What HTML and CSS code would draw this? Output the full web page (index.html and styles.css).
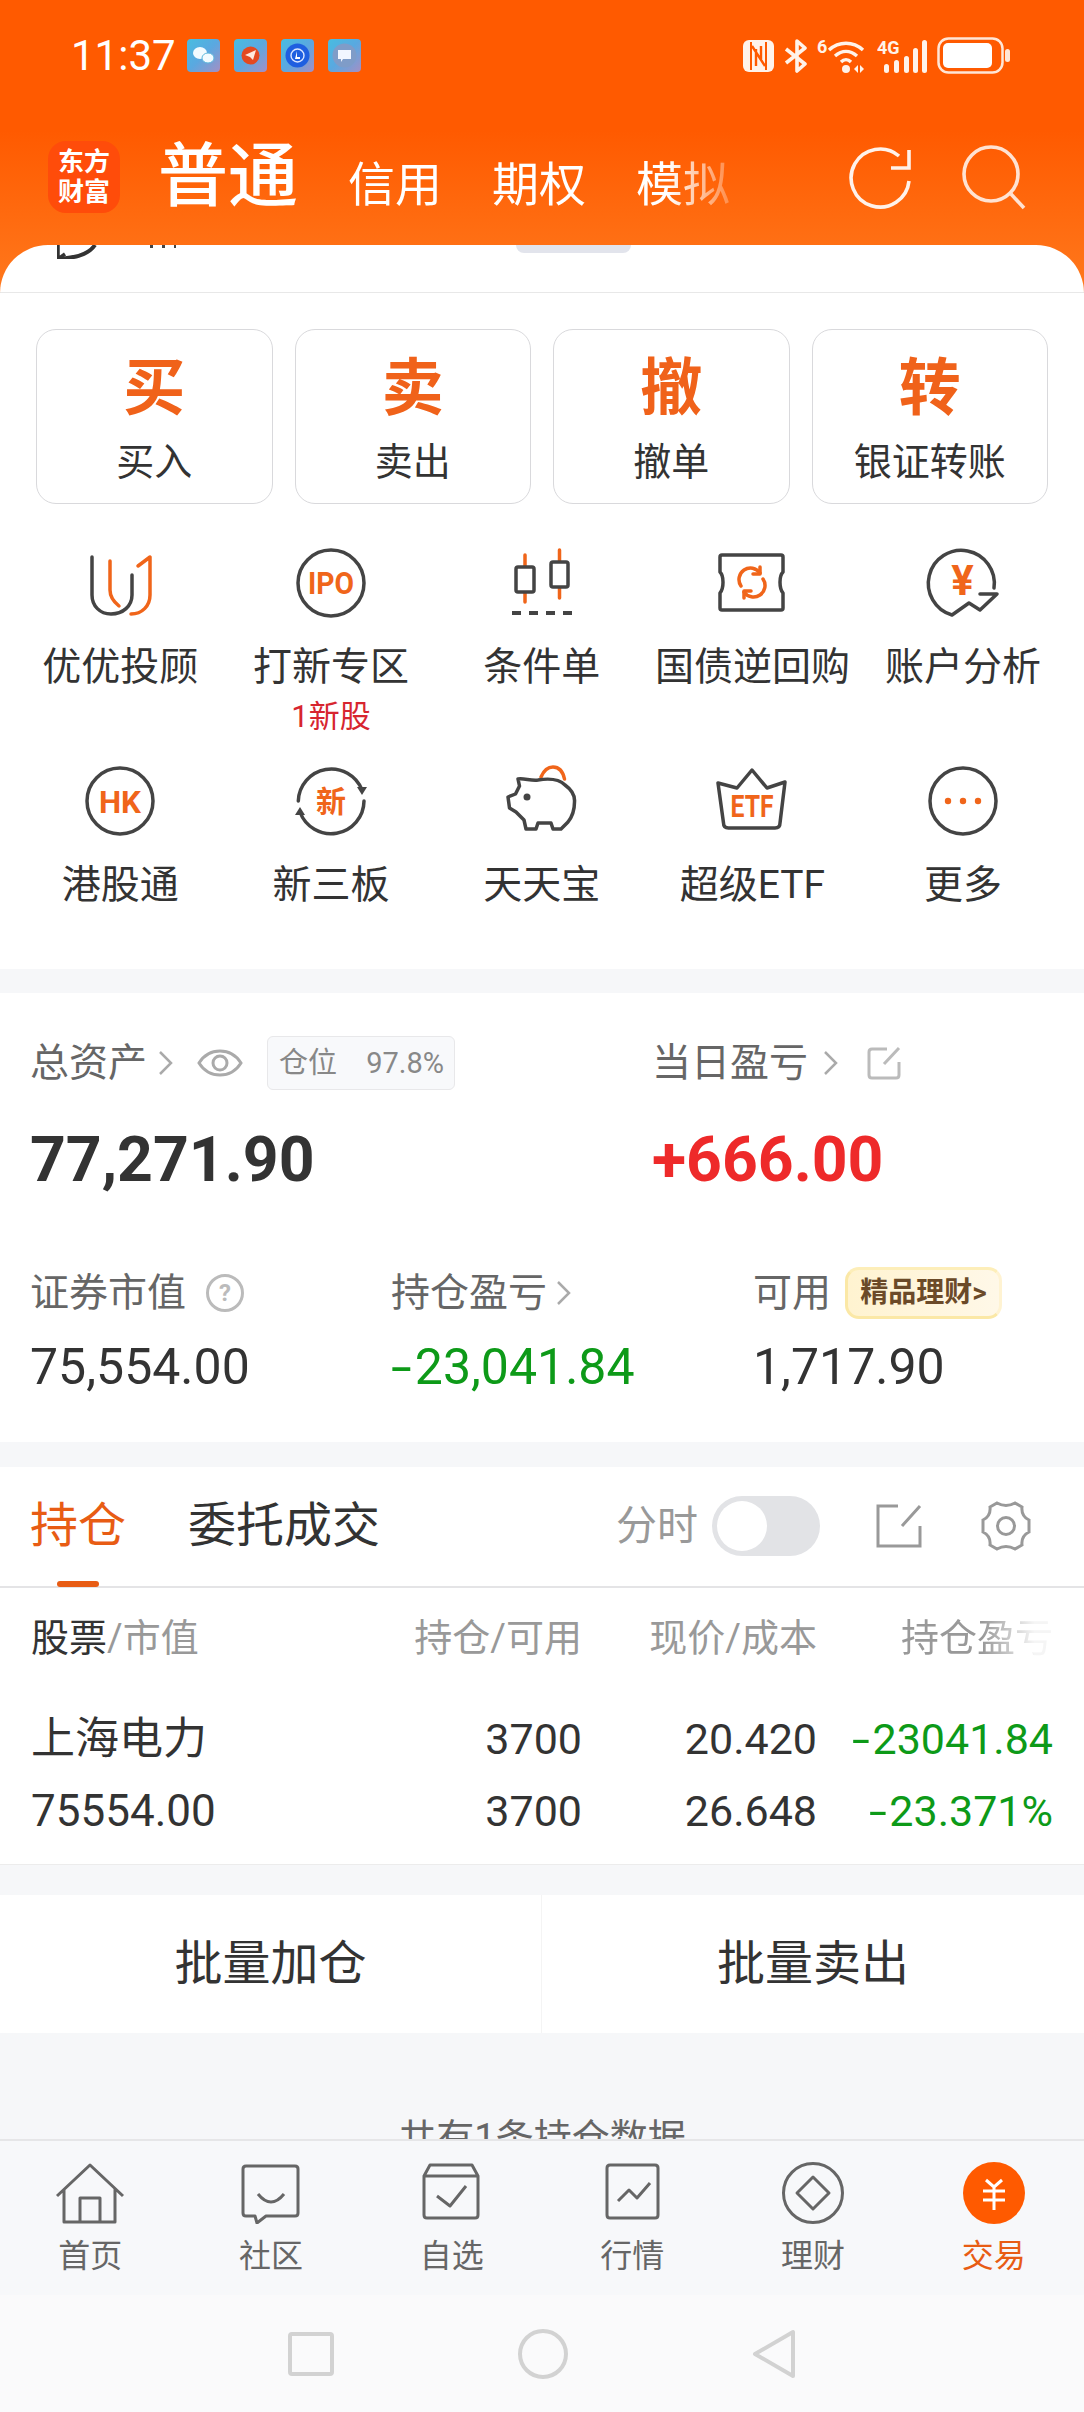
FILE: index.html
```html
<!DOCTYPE html>
<html lang="zh-CN">
<head>
    <meta charset="UTF-8">
    <title>交易</title>
    <link rel="stylesheet" href="styles.css">
</head>
<body>
<div class="app">
    <div class="top">
        <div class="status">
            <span class="status__time">11:37</span>
            <div class="status__apps">
                <span class="app-dot"><svg width="33" height="33" viewBox="0 0 33 33"><ellipse cx="13" cy="14" rx="7" ry="6" fill="#f2fbff"/><ellipse cx="21" cy="19" rx="6" ry="5" fill="#f2fbff" stroke="#5cb8dc"/></svg></span>
                <span class="app-dot"><svg width="33" height="33" viewBox="0 0 33 33"><circle cx="16.5" cy="16.5" r="9" fill="#e4491f"/><path d="M11 16l11-5-3 10-3-3z" fill="#ffe9dc"/></svg></span>
                <span class="app-dot"><svg width="33" height="33" viewBox="0 0 33 33"><circle cx="16.5" cy="16.5" r="12" fill="#1f5fe0"/><circle cx="16.5" cy="16.5" r="6.5" fill="none" stroke="#dbe7ff" stroke-width="1.4"/><path d="M16 12v6h3v2h-5z" fill="#fff"/></svg></span>
                <span class="app-dot"><svg width="33" height="33" viewBox="0 0 33 33"><circle cx="16.5" cy="16.5" r="12" fill="#7f9cc8"/><path d="M10 11h13v9h-8l-2 3v-3h-3z" fill="#f2f6ff"/></svg></span>
            </div>
            <div class="status__sys">
                <svg width="31" height="32" viewBox="0 0 31 32"><rect width="31" height="32" rx="6" fill="#fff3ea"/><path d="M8 2v28M23 2v28" stroke="#ff5a00" stroke-width="2"/><path d="M9 6l13 20M13 9v17M18 6v13" stroke="#ff5a00" stroke-width="2.4" fill="none"/></svg>
                <svg width="23" height="34" viewBox="0 0 23 34"><path d="M2 10l19 15-8 7V2l8 7L2 24" fill="none" stroke="#fff3ea" stroke-width="3.6" stroke-linejoin="round"/></svg>
                <svg width="50" height="36" viewBox="0 0 50 36"><text x="0" y="15" class="sys-text">6</text><path d="M12 12c10-9 24-9 34 0M18 18c7-6 15-6 22 0M24 24c3-3 7-3 10 0" fill="none" stroke="#fff3ea" stroke-width="3.4"/><circle cx="29" cy="31" r="4" fill="#fff3ea"/><path d="M37 31l4-4v8zM43 27l4 4-4 4z" fill="#fff3ea"/></svg>
                <svg width="50" height="36" viewBox="0 0 50 36"><text x="0" y="16" class="sys-text">4G</text><rect x="7" y="26" width="5" height="9" rx="2.5" fill="#fff3ea"/><rect x="17" y="22" width="5" height="13" rx="2.5" fill="#fff3ea"/><rect x="27" y="18" width="5" height="17" rx="2.5" fill="#fff3ea"/><rect x="36" y="10" width="5" height="25" rx="2.5" fill="#fff3ea"/><rect x="45" y="2" width="5" height="33" rx="2.5" fill="#fff3ea"/></svg>
                <svg width="73" height="37" viewBox="0 0 73 37"><rect x="1.5" y="1.5" width="64" height="34" rx="10" fill="none" stroke="#ffe6d6" stroke-width="2.5"/><rect x="6" y="6" width="49" height="25" rx="5" fill="#fff"/><rect x="68" y="12" width="5" height="13" rx="2.5" fill="#ffe6d6"/></svg>
            </div>
        </div>
        <div class="head">
            <div class="logo"><span>东方</span><span>财富</span></div>
            <div class="head__tabs">
                <span class="head__tab head__tab--on">普通</span>
                <span class="head__tab">信用</span>
                <span class="head__tab">期权</span>
                <span class="head__tab">模拟</span>
            </div>
            <svg class="head__refresh" width="66" height="66" viewBox="0 0 66 66"><path d="M62 35A29 29 0 1 1 52 10M44 22H62V4" fill="none" stroke="#fff2ea" stroke-width="3.6"/></svg>
            <svg class="head__search" width="66" height="66" viewBox="0 0 66 66"><circle cx="30" cy="30" r="27" fill="none" stroke="#ffe2d2" stroke-width="3.6"/><path d="M50 50L63 64" stroke="#ffe2d2" stroke-width="3.6"/></svg>
        </div>
    </div>

    <div class="notice">
        <svg class="notice__bubble" width="40" height="14" viewBox="0 0 40 14"><path d="M1 14C12 13 30 12 38 0" fill="none" stroke="#333" stroke-width="4"/><path d="M1 0V14L8 9" fill="none" stroke="#333" stroke-width="3.5"/></svg>
        <span class="notice__stub"></span>
        <span class="notice__chip"></span>
    </div>

    <div class="trade">
        <div class="orders">
            <div class="order"><b>买</b><span>买入</span></div>
            <div class="order"><b>卖</b><span>卖出</span></div>
            <div class="order"><b>撤</b><span>撤单</span></div>
            <div class="order"><b>转</b><span>银证转账</span></div>
        </div>
        <div class="menu">
            <div class="menu__item">
                <svg class="ico" viewBox="0 0 70 70"><path d="M25 13V42C25 49 29 54 34 58" class="ln ln--o"/><path d="M7 9V47C7 58 15 66 26 66C38 66 47 58 47 47V27" class="ln"/><path d="M53 18L65 9V47C65 58 57 66 46 66" class="ln ln--o"/></svg>
                <span>优优投顾</span>
            </div>
            <div class="menu__item">
                <svg class="ico" viewBox="0 0 70 70"><circle cx="35" cy="35" r="33" class="ln"/><text x="35" y="46" textLength="46" lengthAdjust="spacingAndGlyphs" class="ico-text ico-text--ipo">IPO</text></svg>
                <span>打新专区</span>
                <em>1新股</em>
            </div>
            <div class="menu__item">
                <svg class="ico" viewBox="0 0 70 70"><path d="M18 7V54M52.500 2V50" class="ln ln--o"/><rect x="9" y="19" width="18" height="25" rx="2" class="ln ln--fill"/><rect x="44" y="14" width="17" height="25" rx="2" class="ln ln--fill"/><path d="M5 65H65" class="ln ln--dash"/></svg>
                <span>条件单</span>
            </div>
            <div class="menu__item">
                <svg class="ico" viewBox="0 0 70 70"><path d="M5 7H64A2 2 0 0 1 66 9V24C62 28 62 40 66 45V60A2 2 0 0 1 64 62H5A2 2 0 0 1 3 60V45C7 40 7 28 3 24V9A2 2 0 0 1 5 7Z" class="ln"/><path d="M24 38A11 11 0 0 1 43 25M46 31A11 11 0 0 1 27 44" class="ln ln--o"/><path d="M43 19V26H36M27 50V43H34" class="ln ln--o"/></svg>
                <span>国债逆回购</span>
            </div>
            <div class="menu__item">
                <svg class="ico" viewBox="0 0 70 70"><path d="M66 40A33 33 0 1 0 24 67L41 55L52 62L69 46H52" class="ln"/><text x="34.500" y="47" class="ico-text ico-text--yen">¥</text></svg>
                <span>账户分析</span>
            </div>
            <div class="menu__item">
                <svg class="ico" viewBox="0 0 70 70"><circle cx="35" cy="35" r="33" class="ln"/><text x="35" y="47" textLength="42" lengthAdjust="spacingAndGlyphs" class="ico-text ico-text--hk">HK</text></svg>
                <span>港股通</span>
            </div>
            <div class="menu__item">
                <svg class="ico" viewBox="0 0 70 70"><path d="M2.300 35A33 33 0 0 1 66 24M68 35A33 33 0 0 1 4 46" class="ln"/><path d="M61 21H71L66 29ZM-1 49H9L4 41Z" fill="#444"/><text x="35" y="46" class="ico-text ico-text--xin">新</text></svg>
                <span>新三板</span>
            </div>
            <div class="menu__item">
                <svg class="ico" viewBox="0 0 70 70"><path d="M34 11C37 4 41 1 46 1C52 1 56 6 57.500 13" class="ln ln--o"/><path d="M11 13C17 12 24 15 31 14C43 12 52 13 58 19C65 24 68 30 67.500 36C67.500 44 65 51 61 56L54 63H46L44 57H31L29 63H19L17 54L9 46L2.500 42L1 31L8.500 28L12.500 20Z" class="ln"/><circle cx="20" cy="31" r="3.500" fill="#444"/></svg>
                <span>天天宝</span>
            </div>
            <div class="menu__item">
                <svg class="ico" viewBox="0 0 70 70"><path d="M1 17L20 22L35 4L50 22L68 16L63 57Q63 62 58 62H11.500Q6.500 62 6.500 57Z" class="ln"/><text x="35" y="51" textLength="43" lengthAdjust="spacingAndGlyphs" class="ico-text ico-text--etf">ETF</text></svg>
                <span>超级ETF</span>
            </div>
            <div class="menu__item">
                <svg class="ico" viewBox="0 0 70 70"><circle cx="35" cy="35" r="33" class="ln"/><circle cx="20" cy="35" r="3.200" fill="#f0651a"/><circle cx="35" cy="35" r="3.200" fill="#f0651a"/><circle cx="50" cy="35" r="3.200" fill="#f0651a"/></svg>
                <span>更多</span>
            </div>
        </div>
    </div>

    <div class="band band--24"></div>

    <div class="stats">
        <div class="stats__main">
            <div class="stat">
                <div class="stat__label">
                    <span>总资产</span>
                    <svg class="chev" viewBox="0 0 15 26"><path d="M2 2L13 13L2 24"/></svg>
                    <svg class="eye" viewBox="0 0 46 30"><path d="M2 15C12 -1 34 -1 44 15C34 31 12 31 2 15Z"/><circle cx="23" cy="15" r="7"/></svg>
                    <span class="pos-tag"><span>仓位</span><span class="pos-tag__num">97.8%</span></span>
                </div>
                <div class="num-big">77,271.90</div>
            </div>
            <div class="stat">
                <div class="stat__label">
                    <span>当日盈亏</span>
                    <svg class="chev chev--wide" viewBox="0 0 15 26"><path d="M2 2L13 13L2 24"/></svg>
                    <svg class="open-ico" viewBox="0 0 34 34"><path d="M20 3H5Q2 3 2 6V29Q2 32 5 32H29Q32 32 32 29V16M17 18L32 2"/></svg>
                </div>
                <div class="num-big num-big--up">+666.00</div>
            </div>
        </div>
        <div class="stats__sub">
            <div class="stat">
                <div class="stat__label">
                    <span>证券市值</span>
                    <span class="help">?</span>
                </div>
                <div class="num-mid">75,554.00</div>
            </div>
            <div class="stat">
                <div class="stat__label">
                    <span>持仓盈亏</span>
                    <svg class="chev chev--tight" viewBox="0 0 15 26"><path d="M2 2L13 13L2 24"/></svg>
                </div>
                <div class="num-mid num-mid--down"><span class="minus">-</span>23,041.84</div>
            </div>
            <div class="stat">
                <div class="stat__label">
                    <span>可用</span>
                    <span class="gold-tag">精品理财&gt;</span>
                </div>
                <div class="num-mid">1,717.90</div>
            </div>
        </div>
    </div>

    <div class="band band--25"></div>

    <div class="hold">
        <div class="hold__tabs">
            <span class="hold__tab hold__tab--on">持仓</span>
            <span class="hold__tab">委托成交</span>
            <div class="hold__tools">
                <span class="hold__time">分时</span>
                <span class="toggle"><i></i></span>
                <svg class="hold__open" viewBox="0 0 46 44"><path d="M22 2H2V42H44V22M26 22L44 2" fill="none" stroke="#999" stroke-width="3"/></svg>
                <svg class="hold__gear" viewBox="0 0 56 52"><path d="M19 3q9 5 18 0l7 4q-1 9 7 13v12q-8 4-7 13l-7 4q-9-5-18 0l-7-4q1-9-7-13v-12q8-4 7-13z" fill="none" stroke="#999" stroke-width="3"/><circle cx="28" cy="26" r="8.500" fill="none" stroke="#999" stroke-width="3"/></svg>
            </div>
        </div>
        <div class="tbl tbl--head">
            <span><b>股票</b>/市值</span>
            <span>持仓/可用</span>
            <span>现价/成本</span>
            <span class="tbl__fade">持仓盈亏</span>
        </div>
        <div class="tbl tbl--row">
            <span class="tbl__name">上海电力</span>
            <span>3700</span>
            <span>20.420</span>
            <span class="down"><i class="minus">-</i>23041.84</span>
            <span class="tbl__name">75554.00</span>
            <span>3700</span>
            <span>26.648</span>
            <span class="down"><i class="minus">-</i>23.371%</span>
        </div>
    </div>

    <div class="band band--31"></div>

    <div class="batch">
        <span>批量加仓</span>
        <span>批量卖出</span>
    </div>

    <div class="empty">共有1条持仓数据</div>

    <div class="tabbar">
        <div class="tabbar__item">
            <svg viewBox="0 0 70 62"><path d="M2 34L35 3L68 34M9 27V60H60V27M25 60V36H45V60"/></svg>
            <span>首页</span>
        </div>
        <div class="tabbar__item">
            <svg viewBox="0 0 70 62"><path d="M10 4H59Q62 4 62 7V51Q62 54 59 54H30L21 61L19 54H10Q7 54 7 51V7Q7 4 10 4ZM22 32Q35 48 48 32"/></svg>
            <span>社区</span>
        </div>
        <div class="tabbar__item">
            <svg viewBox="0 0 70 62"><path d="M7 14L13 3H55L61 14V53Q61 56 58 56H10Q7 56 7 53ZM7 14H61M20 34L33 44L49 24"/></svg>
            <span>自选</span>
        </div>
        <div class="tabbar__item">
            <svg viewBox="0 0 70 62"><path d="M13 3H58Q61 3 61 6V53Q61 56 58 56H13Q10 56 10 53V6Q10 3 13 3ZM21 39L32 28L40 36L53 21"/></svg>
            <span>行情</span>
        </div>
        <div class="tabbar__item">
            <svg viewBox="0 0 70 62"><circle cx="35" cy="31" r="29.500"/><path d="M35 15L51 31L35 47L19 31Z"/></svg>
            <span>理财</span>
        </div>
        <div class="tabbar__item tabbar__item--on">
            <svg viewBox="0 0 70 62"><circle cx="35" cy="31" r="31" class="tabbar__coin"/><path d="M27 18L35 25L43 18M24 29H46M24 38H46M35 25V48" class="tabbar__yen"/></svg>
            <span>交易</span>
        </div>
    </div>

    <div class="sysnav">
        <svg width="46" height="44" viewBox="0 0 46 44"><rect x="2" y="2" width="42" height="40" rx="2" fill="none" stroke="#d2d2d2" stroke-width="4"/></svg>
        <svg width="50" height="50" viewBox="0 0 50 50"><circle cx="25" cy="25" r="23" fill="none" stroke="#d2d2d2" stroke-width="4"/></svg>
        <svg width="44" height="50" viewBox="0 0 44 50"><path d="M41 3V47L3 25Z" fill="none" stroke="#d2d2d2" stroke-width="4" stroke-linejoin="round"/></svg>
    </div>
</div>
</body>
</html>
```

FILE: styles.css
```css
* {
    box-sizing: border-box;
}
html, body {
    margin: 0;
    padding: 0;
}
body {
    font-family: Roboto, "Noto Sans CJK SC", sans-serif;
    color: #333;
}
.app {
    width: 1084px;
    height: 2412px;
    display: flex;
    flex-direction: column;
    overflow: hidden;
    background: linear-gradient(to bottom, #ff5a00 0, #ff5a00 130px, #ff7a1e 300px);
    background-size: 100% 300px;
    background-repeat: no-repeat;
}

/* top */
.top {
    height: 245px;
    flex: none;
}
.status {
    display: flex;
    align-items: center;
    height: 37px;
    margin-top: 37px;
    padding: 0 74px 0 71px;
    color: #fff;
}
.status__time {
    font-size: 42px;
    line-height: 37px;
    width: 116px;
}
.status__apps {
    display: flex;
    gap: 14px;
}
.app-dot {
    display: block;
    width: 33px;
    height: 33px;
    border-radius: 4px;
    background: linear-gradient(135deg, #48bde0, #5aa8e0 50%, #a58fc4);
}
.app-dot svg {
    display: block;
}
.status__sys {
    display: flex;
    align-items: center;
    gap: 10px;
    margin-left: auto;
}
.sys-text {
    font: bold 18px Roboto, sans-serif;
    fill: #fff3ea;
}
.head {
    display: flex;
    align-items: center;
    margin-top: 67px;
    padding-left: 48px;
    height: 72px;
}
.logo {
    flex: none;
    width: 72px;
    height: 72px;
    border-radius: 18px;
    background: #ff4c0a;
    color: #fff;
    font-size: 26px;
    font-weight: 700;
    line-height: 30px;
    display: flex;
    flex-direction: column;
    align-items: center;
    justify-content: center;
}
.head__tabs {
    flex: none;
    display: flex;
    align-items: baseline;
    gap: 50px;
    width: 572px;
    margin-left: 38px;
    margin-top: 8px;
    color: #fff;
    font-size: 47px;
    line-height: 72px;
    white-space: nowrap;
    -webkit-mask-image: linear-gradient(to right, #000 510px, rgba(0,0,0,.25) 572px);
    mask-image: linear-gradient(to right, #000 510px, rgba(0,0,0,.25) 572px);
}
.head__tab--on {
    font-size: 70px;
    font-weight: 500;
}
.head__refresh {
    flex: none;
    margin-left: 117px;
    margin-top: 4px;
}
.head__search {
    flex: none;
    margin-left: 48px;
}

/* clipped scroll content under header */
.notice {
    height: 48px;
    flex: none;
    background: #fff;
    border-radius: 48px 48px 0 0;
    border-bottom: 1px solid #e8e8e8;
    display: flex;
    align-items: flex-start;
    padding-left: 57px;
    overflow: hidden;
}
.notice__bubble {
    display: block;
}
.notice__stub {
    width: 26px;
    height: 3px;
    margin-left: 53px;
    background: repeating-linear-gradient(to right, #444 0 3px, transparent 3px 12px);
}
.notice__chip {
    width: 115px;
    height: 8px;
    margin-left: 340px;
    background: #e2e4ec;
    border-radius: 0 0 10px 10px;
}

/* trade */
.trade {
    height: 676px;
    flex: none;
    background: #fff;
    padding-top: 36px;
}
.orders {
    display: grid;
    grid-template-columns: repeat(4, 1fr);
    gap: 22px;
    padding: 0 36px;
}
.order {
    height: 175px;
    border: 1.500px solid #d9d9dc;
    border-radius: 20px;
    display: flex;
    flex-direction: column;
    align-items: center;
    padding-top: 28px;
}
.order b {
    font-size: 62px;
    line-height: 62px;
    font-weight: 700;
    color: #f0621a;
}
.order span {
    font-size: 38px;
    line-height: 40px;
    margin-top: 22px;
}
.menu {
    display: grid;
    grid-template-columns: repeat(5, 210.700px);
    grid-auto-rows: 218px;
    padding: 44px 0 0 15px;
}
.menu__item {
    display: flex;
    flex-direction: column;
    align-items: center;
    font-size: 39px;
    line-height: 40px;
    white-space: nowrap;
}
.menu__item span {
    margin-top: 29px;
}
.menu__item em {
    font-style: normal;
    font-size: 31px;
    line-height: 32px;
    color: #d7252f;
    margin-top: 14px;
}
.ico {
    display: block;
    width: 70px;
    height: 70px;
    overflow: visible;
}
.ln {
    fill: none;
    stroke: #444;
    stroke-width: 3.500;
    stroke-linejoin: round;
    stroke-linecap: round;
}
.ln--o {
    stroke: #f0651a;
}
.ln--fill {
    fill: #fff;
}
.ln--dash {
    stroke-dasharray: 9 8;
    stroke-width: 4;
    stroke-linecap: butt;
}
.ico-text {
    font-family: Roboto, "Noto Sans CJK SC", sans-serif;
    font-weight: 700;
    fill: #f0651a;
    text-anchor: middle;
}
.ico-text--ipo { font-size: 31px; }
.ico-text--yen { font-size: 42px; }
.ico-text--hk { font-size: 32px; }
.ico-text--xin { font-size: 30px; }
.ico-text--etf { font-size: 31px; }

.band {
    flex: none;
    background: #f6f7f9;
}
.band--24 { height: 24px; }
.band--25 { height: 25px; }
.band--31 { height: 31px; border-top: 1px solid #ececec; }

/* stats */
.stats {
    height: 449px;
    flex: none;
    background: #fff;
    padding: 51px 0 0 30px;
}
.stats__main {
    display: grid;
    grid-template-columns: 622px 1fr;
}
.stats__sub {
    display: grid;
    grid-template-columns: 361px 362px 1fr;
    margin-top: 79px;
}
.stat__label {
    display: flex;
    align-items: center;
    height: 38px;
    font-size: 39px;
    line-height: 38px;
    color: #666;
    white-space: nowrap;
}
.chev {
    width: 15px;
    height: 26px;
    margin-left: 11px;
    fill: none;
    stroke: #aaa;
    stroke-width: 2.500;
}
.chev--wide {
    margin-left: 15px;
}
.chev--tight {
    margin-left: 9px;
}
.eye {
    width: 46px;
    height: 30px;
    margin-left: 24px;
    fill: none;
    stroke: #aaa;
    stroke-width: 3;
}
.pos-tag {
    display: flex;
    align-items: center;
    justify-content: space-between;
    width: 188px;
    height: 54px;
    margin-left: 24px;
    padding: 0 10px 0 11px;
    border: 1px solid #e8e8ea;
    border-radius: 6px;
    background: #f8f9fb;
    color: #888;
    font-size: 29px;
}
.pos-tag__num {
    font-size: 29px;
}
.open-ico {
    width: 34px;
    height: 34px;
    margin-left: 29px;
    fill: none;
    stroke: #bbb;
    stroke-width: 3;
}
.num-big {
    font-size: 62.500px;
    line-height: 70px;
    font-weight: 700;
    margin-top: 43px;
}
.num-big--up {
    color: #ee2a2a;
}
.help {
    display: flex;
    align-items: center;
    justify-content: center;
    width: 38px;
    height: 38px;
    margin-left: 20px;
    border: 3px solid #bbb;
    border-radius: 50%;
    color: #bbb;
    font-size: 24px;
    font-weight: 700;
}
.gold-tag {
    display: flex;
    align-items: center;
    justify-content: center;
    width: 157px;
    height: 52px;
    margin-left: 14px;
    border: 3px solid #fbe8a6;
    border-top-color: #fdeeb9;
    border-right-color: #fff3d2;
    border-radius: 14px;
    background: linear-gradient(to right, #fff3d0, #fff8e8);
    color: #6b4a28;
    font-size: 28px;
    font-weight: 700;
}
.num-mid {
    font-size: 50px;
    line-height: 60px;
    margin-top: 25px;
}
.num-mid--down,
.down {
    color: #0d9a18;
}
.minus {
    display: inline-block;
    width: .276em;
    margin-right: .2em;
    font-style: normal;
    transform: scaleX(1.5);
    transform-origin: left center;
}

/* holdings */
.hold {
    height: 397px;
    flex: none;
    background: #fff;
}
.hold__tabs {
    position: relative;
    display: flex;
    align-items: center;
    height: 121px;
    padding: 0 50px 1px 30px;
    border-bottom: 2px solid #e4e4e6;
}
.hold__tab {
    font-size: 48px;
    line-height: 60px;
    margin-right: 62px;
}
.hold__tab--on {
    color: #e85c14;
}
.hold__tab--on::after {
    content: "";
    position: absolute;
    left: 57px;
    bottom: -1px;
    width: 42px;
    height: 6px;
    border-radius: 3px;
    background: #e85c14;
}
.hold__tools {
    display: flex;
    align-items: center;
    margin-left: auto;
}
.hold__time {
    font-size: 41px;
    color: #999;
    line-height: 44px;
}
.toggle {
    display: block;
    width: 108px;
    height: 60px;
    margin-left: 14px;
    padding: 5px;
    border-radius: 30px;
    background: #e2e3e6;
}
.toggle i {
    display: block;
    width: 50px;
    height: 50px;
    border-radius: 50%;
    background: #fff;
}
.hold__open {
    width: 46px;
    height: 44px;
    margin-left: 56px;
}
.hold__gear {
    width: 56px;
    height: 52px;
    margin-left: 56px;
}
.tbl {
    display: grid;
    grid-template-columns: 1fr 171px 235px 236px;
    padding: 0 31px;
    white-space: nowrap;
}
.tbl span:not(:nth-child(4n+1)) {
    text-align: right;
}
.tbl--head {
    margin-top: 30px;
    font-size: 38px;
    line-height: 40px;
    color: #999;
}
.tbl--head b {
    font-weight: 400;
    color: #333;
}
.tbl__fade {
    -webkit-mask-image: linear-gradient(to right, #000 70%, rgba(0,0,0,.1) 92%);
    mask-image: linear-gradient(to right, #000 70%, rgba(0,0,0,.1) 92%);
}
.tbl--row {
    margin-top: 56px;
    font-size: 43px;
    line-height: 50px;
    row-gap: 22px;
}
.tbl__name {
    font-size: 44px;
}

/* batch */
.batch {
    height: 138px;
    flex: none;
    display: grid;
    grid-template-columns: 541px 1fr;
    background: #fff;
    font-size: 48px;
    line-height: 138px;
    text-align: center;
}
.batch span + span {
    border-left: 1px solid #f4f4f4;
}
.empty {
    height: 106px;
    flex: none;
    overflow: hidden;
    background: #f6f7f9;
    padding-top: 85px;
    text-align: center;
    font-size: 38px;
    line-height: 40px;
    color: #666;
}

/* bottom */
.tabbar {
    height: 156px;
    flex: none;
    display: grid;
    grid-template-columns: repeat(6, 1fr);
    padding-top: 21px;
    background: #f7f8fa;
    border-top: 2px solid #e6e6e8;
}
.tabbar__item {
    display: flex;
    flex-direction: column;
    align-items: center;
    font-size: 32px;
    line-height: 36px;
    color: #666;
}
.tabbar__item svg {
    display: block;
    width: 70px;
    height: 62px;
    margin-bottom: 14px;
    fill: none;
    stroke: #666;
    stroke-width: 3;
    stroke-linejoin: round;
}
.tabbar__item--on {
    color: #e85c14;
}
.tabbar svg .tabbar__coin {
    fill: #ff5a00;
    stroke: none;
}
.tabbar svg .tabbar__yen {
    stroke: #fff;
}
.sysnav {
    height: 117px;
    flex: none;
    display: flex;
    align-items: center;
    justify-content: center;
    gap: 184px;
    background: #fafafb;
}
```
